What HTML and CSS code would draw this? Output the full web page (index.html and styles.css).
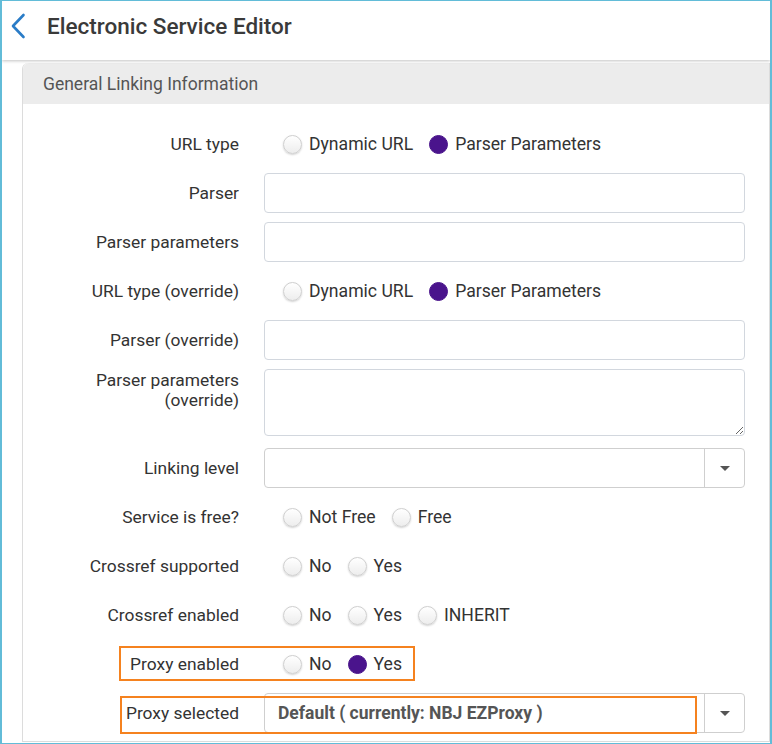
FILE: index.html
```html
<!DOCTYPE html>
<html>
<head>
<meta charset="utf-8">
<link rel="stylesheet" href="styles.css">
</head>
<body>
<div class="frame">
  <header class="topbar">
    <svg class="back" width="24" height="26" viewBox="0 0 24 26"><path d="M14.5 2 L4 13 L14.5 24" fill="none" stroke="#2a7cc7" stroke-width="2.6" stroke-linecap="round" stroke-linejoin="round"/></svg>
    <h1 class="title">Electronic Service Editor</h1>
  </header>
  <section class="panel">
    <div class="panel-head">General Linking Information</div>
    <div class="form">
      <div class="row">
        <div class="label">URL type</div>
        <div class="options">
          <span class="opt"><span class="radio"></span>Dynamic URL</span>
          <span class="opt"><span class="radio checked"></span>Parser Parameters</span>
        </div>
      </div>
      <div class="row">
        <div class="label">Parser</div>
        <input class="input" type="text">
      </div>
      <div class="row">
        <div class="label">Parser parameters</div>
        <input class="input" type="text">
      </div>
      <div class="row">
        <div class="label">URL type (override)</div>
        <div class="options">
          <span class="opt"><span class="radio"></span>Dynamic URL</span>
          <span class="opt"><span class="radio checked"></span>Parser Parameters</span>
        </div>
      </div>
      <div class="row">
        <div class="label">Parser (override)</div>
        <input class="input" type="text">
      </div>
      <div class="row row-tall">
        <div class="label label-top">Parser parameters<br>(override)</div>
        <textarea class="textarea"></textarea>
      </div>
      <div class="row">
        <div class="label">Linking level</div>
        <div class="select"><span class="select-value"></span><span class="select-btn"><span class="caret"></span></span></div>
      </div>
      <div class="row">
        <div class="label">Service is free?</div>
        <div class="options">
          <span class="opt"><span class="radio"></span>Not Free</span>
          <span class="opt"><span class="radio"></span>Free</span>
        </div>
      </div>
      <div class="row">
        <div class="label">Crossref supported</div>
        <div class="options">
          <span class="opt"><span class="radio"></span>No</span>
          <span class="opt"><span class="radio"></span>Yes</span>
        </div>
      </div>
      <div class="row">
        <div class="label">Crossref enabled</div>
        <div class="options">
          <span class="opt"><span class="radio"></span>No</span>
          <span class="opt"><span class="radio"></span>Yes</span>
          <span class="opt"><span class="radio"></span>INHERIT</span>
        </div>
      </div>
      <div class="row">
        <div class="label">Proxy enabled</div>
        <div class="options">
          <span class="opt"><span class="radio"></span>No</span>
          <span class="opt"><span class="radio checked"></span>Yes</span>
        </div>
        <div class="mark mark-enabled"></div>
      </div>
      <div class="row">
        <div class="label">Proxy selected</div>
        <div class="select"><span class="select-value bold">Default ( currently: NBJ EZProxy )</span><span class="select-btn"><span class="caret"></span></span></div>
        <div class="mark mark-selected"></div>
      </div>
    </div>
  </section>
</div>
</body>
</html>
```
FILE: styles.css
```css
* { box-sizing: border-box; }
html, body { margin: 0; padding: 0; background: #fff; }
body { font-family: Roboto, "Liberation Sans", sans-serif; color: #333; }

.frame {
  width: 772px;
  height: 744px;
  overflow: hidden;
  border: 1px solid #62bcd8;
  border-left-width: 2px;
  border-right-width: 2px;
  background: #fff;
  display: flex;
  flex-direction: column;
}

.topbar {
  height: 59px;
  flex: none;
  display: flex;
  align-items: flex-start;
  padding: 12px 0 0 7px;
  background: #fff;
  box-shadow: 0 1px 3px rgba(0,0,0,0.24);
  position: relative;
  z-index: 2;
}
.back { flex: none; }
.title {
  margin: 0 0 0 14px;
  font-size: 22.5px;
  line-height: 26px;
  font-weight: 500;
  color: #3a3a3a;
}

.panel {
  margin: 3px 0 0 20px;
  border: 1px solid #dcdcdc;
  border-top: none;
  border-radius: 6px 0 0 0;
  flex: none;
  padding-bottom: 8px;
}
.panel-head {
  height: 41px;
  display: flex;
  align-items: center;
  padding-left: 20px;
  background: #ececec;
  border-radius: 6px 0 0 0;
  font-size: 17.5px;
  color: #555;
}

.form {
  display: flex;
  flex-direction: column;
  gap: 9px;
  padding: 20px 24px 0 0;
}
.row {
  position: relative;
  display: grid;
  grid-template-columns: 216px 1fr;
  column-gap: 25px;
  min-height: 40px;
  align-items: center;
}
.row-tall { margin-bottom: 3px; }
.label {
  text-align: right;
  font-size: 17.4px;
  line-height: 20px;
  color: #333;
}
.label-top { align-self: start; padding-top: 1px; }

.input {
  height: 40px;
  width: 100%;
  border: 1px solid #d2d7de;
  border-radius: 4px;
  background: #fff;
  font: inherit;
  margin: 0;
}
.textarea {
  display: block;
  height: 67px;
  width: 100%;
  border: 1px solid #d2d7de;
  border-radius: 4px;
  background: #fff;
  resize: both;
  margin: 0;
  font: inherit;
}

.options {
  display: flex;
  align-items: center;
  gap: 16px;
  padding-left: 19px;
  font-size: 17.6px;
  color: #333;
}
.opt { display: flex; align-items: center; gap: 7px; }
.radio {
  width: 19px;
  height: 19px;
  border-radius: 50%;
  border: 1px solid #cfcfcf;
  background: linear-gradient(#ffffff, #ededed);
  box-shadow: 0 1px 2px rgba(0,0,0,0.18);
  flex: none;
}
.radio.checked {
  background: #4a148c;
  border-color: #4a148c;
  box-shadow: none;
}

.select {
  height: 40px;
  display: flex;
  border: 1px solid #cfcfcf;
  border-radius: 4px;
  background: #fff;
}
.select-value {
  flex: 1;
  display: flex;
  align-items: center;
  padding-left: 13px;
  font-size: 17.5px;
  color: #555;
}
.bold { font-weight: 700; }
.select-btn {
  width: 40px;
  flex: none;
  border-left: 1px solid #cfcfcf;
  display: flex;
  align-items: center;
  justify-content: center;
}
.caret {
  width: 0;
  height: 0;
  border-left: 5px solid transparent;
  border-right: 5px solid transparent;
  border-top: 5px solid #555;
}

.mark {
  position: absolute;
  border: 2px solid #f5821f;
  pointer-events: none;
}
.mark-enabled { left: 96px; top: 2px; width: 296px; height: 35px; }
.mark-selected { left: 97px; top: 3px; width: 577px; height: 38px; }
```
